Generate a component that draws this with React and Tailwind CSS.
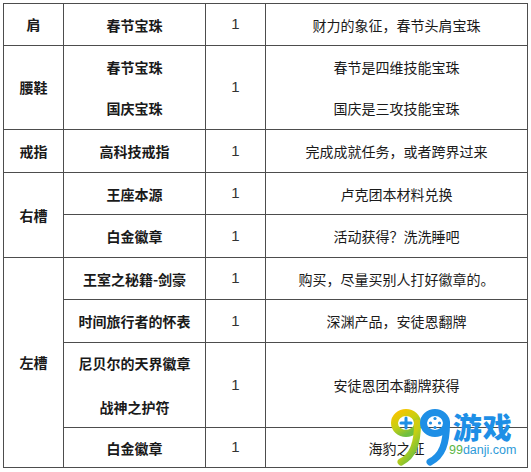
const rows = [
  { slot: "肩", span: 1, items: ["春节宝珠"], num: "1", note: ["财力的象征，春节头肩宝珠"] },
  { slot: "腰鞋", span: 1, items: ["春节宝珠", "国庆宝珠"], num: "1", note: ["春节是四维技能宝珠", "国庆是三攻技能宝珠"], lh: "leading-[41px]" },
  { slot: "戒指", span: 1, items: ["高科技戒指"], num: "1", note: ["完成成就任务，或者跨界过来"] },
  { slot: "右槽", span: 2, items: ["王座本源"], num: "1", note: ["卢克团本材料兑换"] },
  { items: ["白金徽章"], num: "1", note: ["活动获得？洗洗睡吧"] },
  { slot: "左槽", span: 4, items: ["王室之秘籍-剑豪"], num: "1", note: ["购买，尽量买别人打好徽章的。"] },
  { items: ["时间旅行者的怀表"], num: "1", note: ["深渊产品，安徒恩翻牌"] },
  { items: ["尼贝尔的天界徽章", "战神之护符"], num: "1", note: ["安徒恩团本翻牌获得"], lh: "leading-[44px]" },
  { items: ["白金徽章"], num: "1", note: ["海豹之证"] },
];

const cell = "border-r border-b border-[#4d4d4d] flex flex-col items-center justify-center";

const Logo = () => (
  <div className="absolute left-[390px] top-[408px] flex items-start">
    <svg width="60" height="58" viewBox="0 0 60 58">
      <defs>
        <linearGradient id="g9" x1="0" y1="0" x2="0.6" y2="1">
          <stop offset="0" stopColor="#f9c400" />
          <stop offset="0.55" stopColor="#c6cf12" />
          <stop offset="1" stopColor="#6fbf3f" />
        </linearGradient>
      </defs>
      <ellipse cx="16" cy="15" rx="11.5" ry="10.5" fill="none" stroke="url(#g9)" strokeWidth="7" />
      <path d="M27.5 15 C27.5 36 23 48 11 54" fill="none" stroke="url(#g9)" strokeWidth="7" strokeLinecap="round" />
      <path d="M11 15 H21 M16 10 V20" stroke="#1e8fe6" strokeWidth="3" strokeLinecap="round" />
      <ellipse cx="45" cy="15" rx="11.5" ry="10.5" fill="none" stroke="#1e8fe6" strokeWidth="7" />
      <path d="M56.5 15 C56.5 36 52 48 40 54" fill="none" stroke="#1e8fe6" strokeWidth="7" strokeLinecap="round" />
      <circle cx="45" cy="10.5" r="1.6" fill="#1e8fe6" />
      <circle cx="45" cy="19.5" r="1.6" fill="#1e8fe6" />
      <circle cx="40.5" cy="15" r="1.6" fill="#1e8fe6" />
      <circle cx="49.5" cy="15" r="1.6" fill="#1e8fe6" />
    </svg>
    <div className="flex flex-col items-center -ml-[1px] mt-[4px]">
      <span className="text-[29px] leading-[29px] font-black text-[#1e8fe6] tracking-[1px] [font-family:'Noto_Sans_CJK_SC',sans-serif]">
        游戏
      </span>
      <span className="mt-[3px] text-[12.5px] leading-[13px] text-[#2d9ad8] [font-family:'Liberation_Sans',sans-serif]">
        <span className="text-[#5bb544]">99</span>danji.com
      </span>
    </div>
  </div>
);

export default function App() {
  return (
    <div className="relative w-[531px] h-[472px] bg-white pt-[3px] pl-[3px] text-[14px] text-[#1a1a1a] [font-family:'Noto_Sans_CJK_SC',sans-serif]">
      <div className="grid grid-cols-[60px_142px_60px_262px] grid-rows-[42px_84px_43px_42px_43px_42px_43px_85px_40px] w-[525px] border-t border-l border-[#4d4d4d]">
        {rows.map((r, i) => (
          <div key={i} className="contents">
            {r.slot && (
              <div
                className={`${cell} font-bold ${
                  r.span === 2 ? "row-span-2" : r.span === 4 ? "row-span-4" : ""
                }`}
              >
                {r.slot}
              </div>
            )}
            <div className={`${cell} font-bold`}>
              {r.items.map((t) => (
                <span key={t} className={r.lh || "leading-5"}>
                  {t}
                </span>
              ))}
            </div>
            <div className={`${cell} text-[#333] [font-family:'Liberation_Sans',sans-serif] text-[15px]`}>
              {r.num}
            </div>
            <div className={cell}>
              {r.note.map((t) => (
                <span key={t} className={r.lh || "leading-5"}>
                  {t}
                </span>
              ))}
            </div>
          </div>
        ))}
      </div>
      <Logo />
    </div>
  );
}
